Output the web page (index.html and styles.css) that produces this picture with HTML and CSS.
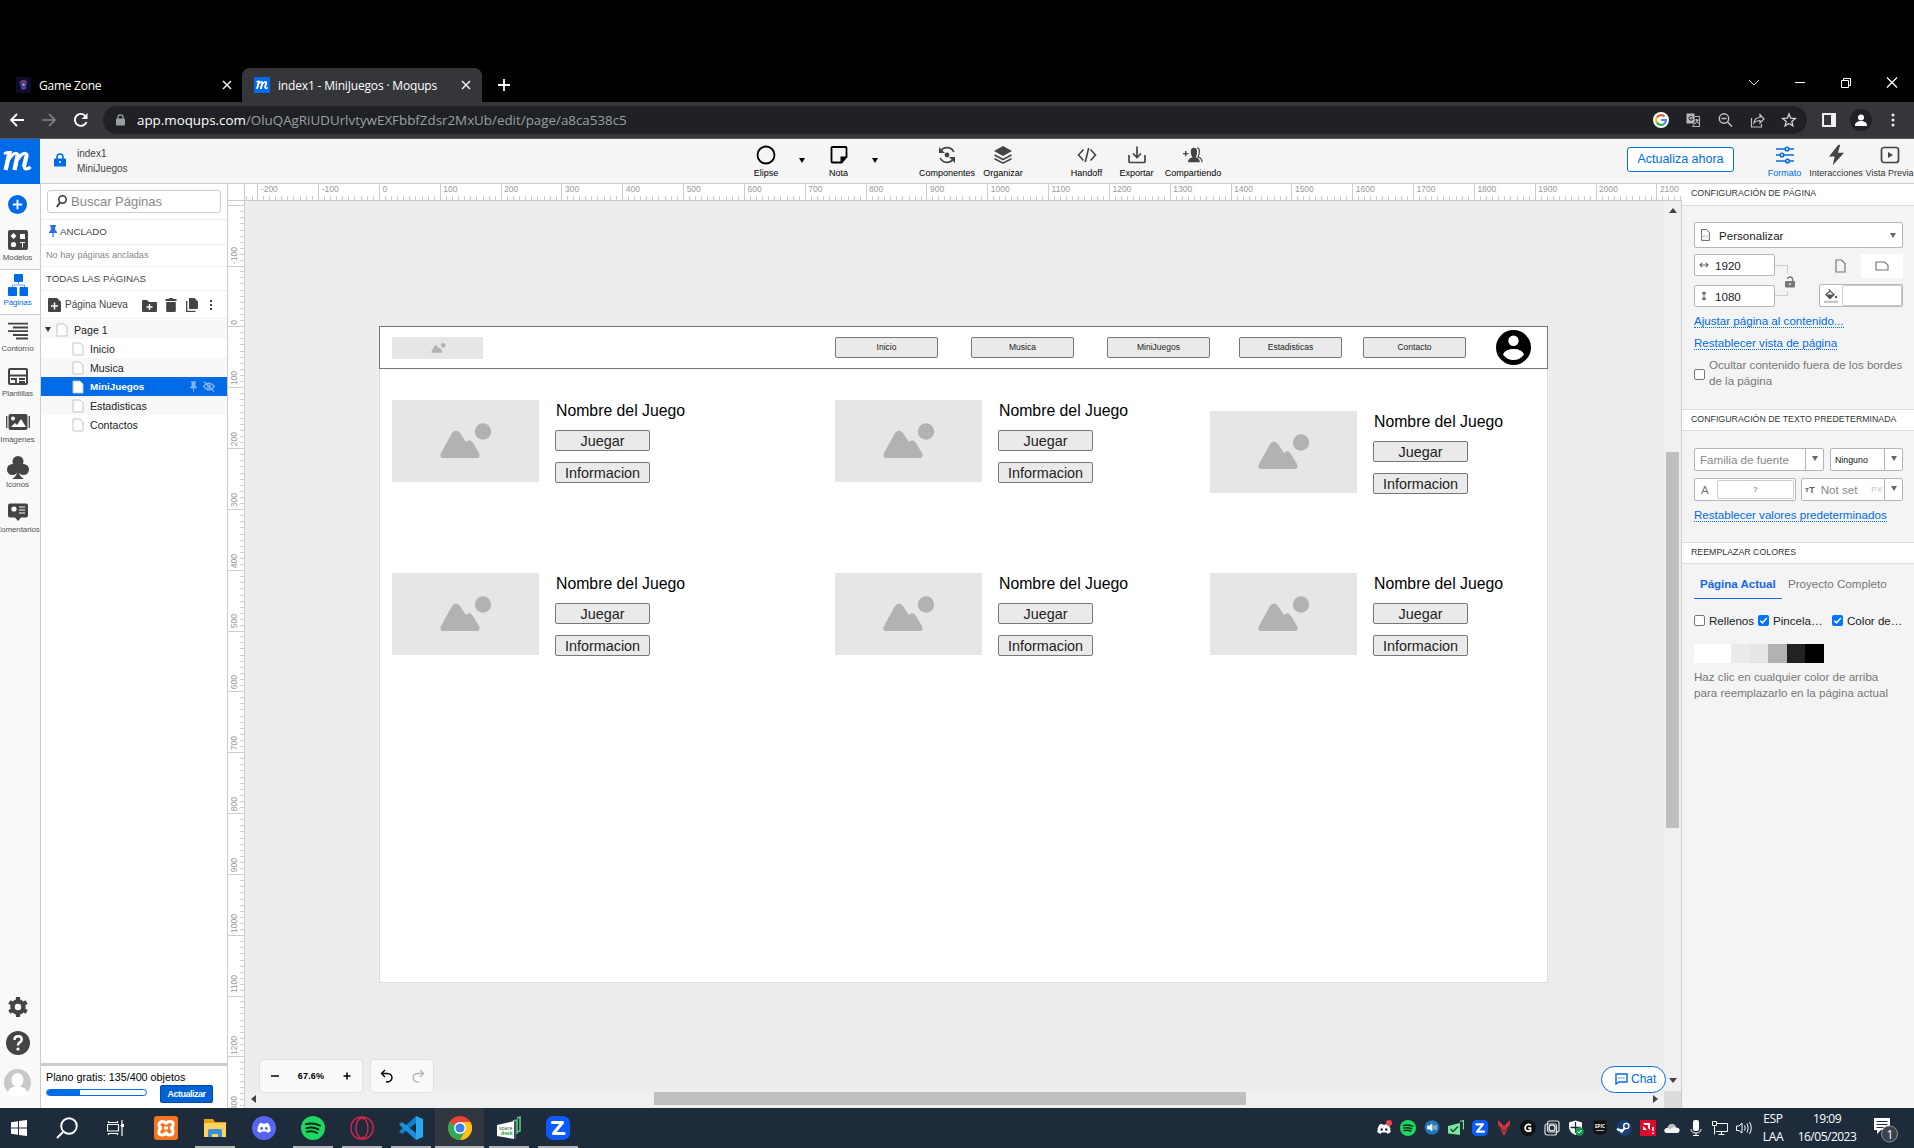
FILE: index.html
```html
<!DOCTYPE html>
<html lang="es">
<head>
<meta charset="utf-8">
<title>index1 - MiniJuegos · Moqups</title>
<link rel="stylesheet" href="styles.css">
</head>
<body>
<svg class="defs" width="0" height="0">
  <symbol id="file" viewBox="0 0 12 14"><path d="M1 1h7l3 3v9H1z" fill="#fff" stroke="#c4c4c4"/></symbol>
  <symbol id="pin" viewBox="0 0 8 12"><path d="M1 0h6v1.5H6.2V5L8 7v1H4.6v4H3.4V8H0V7l1.8-2V1.500H1z" fill="currentColor"/></symbol>
  <symbol id="photo" viewBox="0 0 52 36"><path d="M4 35q-5 0-3-5L12 10q4-5 8 0l6 9q4-4 7 1l6 10q2 5-3 5z" fill="#b2b2b2"/><circle cx="43" cy="8.500" r="8.200" fill="#b2b2b2"/></symbol>
  <symbol id="x" viewBox="0 0 10 10"><path d="M1 1l8 8M9 1L1 9" stroke="#eee" stroke-width="1.500"/></symbol>
  <symbol id="zoomus" viewBox="0 0 24 24"><rect width="24" height="24" rx="7" fill="#0b5cff"/><path d="M6.500 6.500h10L7.500 17.500H18" fill="none" stroke="#fff" stroke-width="3.200" stroke-linejoin="round" stroke-linecap="round"/></symbol>
  <symbol id="spotify" viewBox="0 0 24 24"><circle cx="12" cy="12" r="12" fill="#1ed760"/><path d="M5 8.300q7-2 14 1.300M5.500 12.200q6.500-1.700 12 1.200M6 15.800q5.500-1.300 10 1" fill="none" stroke="#14261c" stroke-width="2" stroke-linecap="round"/></symbol>
  <symbol id="discord" viewBox="0 0 18 14"><path d="M3 1.500Q5 .3 6.600.2l.6 1.200h3.600l.6-1.200q1.600.1 3.600 1.300 2.800 4.500 2.600 9.300-2 1.700-4.500 2.400l-1-1.800H5.900l-1 1.800Q2.400 12.500.4 10.800.2 6 3 1.500z" fill="#fff"/></symbol>
  <symbol id="mlogo" viewBox="0 0 30 20"><path d="M2 2.800Q5 1 8.500 1.200L4.500 18.500" fill="none" stroke="#fff" stroke-width="2.600"/><path d="M7.300 1.500L3.500 19" fill="none" stroke="#fff" stroke-width="4"/><path d="M7 8q4-6 7.500-5.500 2 .5 1.300 3.500L13 19M16 8q4-6 7.500-5.500 2 .5 1.300 3.500l-2.300 9q-.6 3 2.300 2.800 2-.2 3.700-2" fill="none" stroke="#fff" stroke-width="3.200"/><path d="M15.300 5l-3 14M24.300 5l-2.500 11" stroke="#fff" stroke-width="4"/></symbol>
</svg>

<div class="browser">
  <div class="tabs">
    <div class="tab">
      <svg class="fav" viewBox="0 0 15 16"><rect width="15" height="16" fill="#0d0d2b"/><path d="M4 5q3.500-4 7 0l-1 7q-2.500 2-5 0z" fill="#3b3a86"/><path d="M3.500 6q4-5 8 0M6 11h3" stroke="#b23a5a" fill="none"/><circle cx="7.500" cy="7.500" r="1.500" fill="#8690c8"/></svg>
      <span>Game Zone</span><svg class="close"><use href="#x"/></svg>
    </div>
    <div class="tab tab-active">
      <svg class="fav" viewBox="0 0 16 16"><rect width="16" height="16" fill="#006be6"/><use href="#mlogo" x="1.500" y="3" width="13" height="10"/></svg>
      <span>index1 - MiniJuegos · Moqups</span><svg class="close"><use href="#x"/></svg>
    </div>
    <svg class="newtab" viewBox="0 0 12 12"><path d="M6 0v12M0 6h12" stroke="#fff" stroke-width="1.800"/></svg>
    <div class="wincontrols">
      <svg viewBox="0 0 46 20"><path d="M18 7l5 5 5-5" stroke="#ddd" fill="none"/></svg>
      <svg viewBox="0 0 46 20"><path d="M18 9.500h10" stroke="#fff"/></svg>
      <svg viewBox="0 0 46 20"><path d="M18.500 7.500h7v7h-7zM20.500 7.500v-2h7v7h-2" stroke="#fff" fill="none"/></svg>
      <svg viewBox="0 0 46 20"><path d="M18 4.500l10 10M28 4.500L18 14.500" stroke="#fff" stroke-width="1.200"/></svg>
    </div>
  </div>
  <div class="addressbar">
    <svg class="nav" viewBox="0 0 16 16"><path d="M15 8H2M8 2L2 8l6 6" stroke="#fff" stroke-width="1.800" fill="none"/></svg>
    <svg class="nav" viewBox="0 0 16 16"><path d="M1 8h13M8 2l6 6-6 6" stroke="#85878b" stroke-width="1.600" fill="none"/></svg>
    <svg class="nav" viewBox="0 0 16 16"><path d="M13.500 10A6 6 0 1 1 12.500 4" stroke="#fff" stroke-width="1.900" fill="none"/><path d="M14.500 1v6h-6z" fill="#fff"/></svg>
    <div class="url">
      <svg class="lock" viewBox="0 0 9 12"><rect y="4.500" width="9" height="7" rx="1" fill="#9aa0a6"/><path d="M2 5V3q0-2.200 2.500-2.200T7 3v2" fill="none" stroke="#9aa0a6" stroke-width="1.300"/></svg>
      <span class="address"><b>app.moqups.com</b>/OluQAgRiUDUrlvtywEXFbbfZdsr2MxUb/edit/page/a8ca538c5</span>
      <div class="urlicons">
        <svg viewBox="0 0 32 16"><circle cx="16" cy="8" r="8" fill="#fff"/><g fill="none" stroke-width="2"><path d="M11.800 5.500A5 5 0 0 1 19.500 4.500" stroke="#ea4335"/><path d="M11.600 10.300A5 5 0 0 1 11.700 5.600" stroke="#fbbc05"/><path d="M19.300 11.700A5 5 0 0 1 11.600 10.300" stroke="#34a853"/><path d="M16 8h5A5 5 0 0 1 19.200 11.800" stroke="#4285f4"/></g></svg>
        <svg viewBox="0 0 32 16"><rect x="9.500" y="1.500" width="8" height="10" fill="#b7b9bb"/><path d="M17.500 4.500h5v10h-7l2-3" fill="none" stroke="#b7b9bb"/><path d="M15.500 5a2 2 0 1 0 .3 2h-2" stroke="#202124" fill="none"/><path d="M17 8h5M19.500 7v1l2 4M21 8l-3 4" stroke="#b7b9bb" fill="none"/></svg>
        <svg viewBox="0 0 32 16"><circle cx="15" cy="6.500" r="4.700" fill="none" stroke="#c2c4c6" stroke-width="1.400"/><path d="M12.500 6.500h5M18.500 10l4.500 4.500" stroke="#c2c4c6" stroke-width="1.500"/></svg>
        <svg viewBox="0 0 32 16"><path d="M10.500 6v9h10v-3M13 11q.5-5.500 6-5.500V2.500L23 7l-4 4V8.500q-4 0-6 2.500z" fill="none" stroke="#c2c4c6" stroke-width="1.200"/></svg>
        <svg viewBox="0 0 32 16"><path d="M16 2l1.700 4.200 4.600.3-3.500 2.900 1.100 4.500L16 11.400l-3.900 2.500 1.100-4.500L9.700 6.500l4.600-.3z" fill="none" stroke="#d5d6d8" stroke-width="1.300"/></svg>
      </div>
    </div>
    <div class="browsericons">
      <svg viewBox="0 0 32 24"><path d="M9 5h14v14H9z" fill="#f1f1f1"/><path d="M11 7h7v10h-7z" fill="#35363a"/></svg>
      <svg viewBox="0 0 32 24"><circle cx="16" cy="12" r="11" fill="#202124"/><circle cx="16" cy="9.500" r="3" fill="#fff"/><path d="M10 18v-1.500q1-3.500 6-3.500t6 3.500V18z" fill="#fff"/></svg>
      <svg viewBox="0 0 32 24"><g fill="#eee"><circle cx="16" cy="7" r="1.500"/><circle cx="16" cy="12" r="1.500"/><circle cx="16" cy="17" r="1.500"/></g></svg>
    </div>
  </div>
</div>

<div class="appbar">
  <div class="brand"><svg width="30" height="20"><use href="#mlogo"/></svg></div>
  <svg class="applock" viewBox="0 0 12 14"><rect y="5.500" width="12" height="8" rx="1" fill="#006be6"/><path d="M3 6V4q0-3 3-3t3 3v2" fill="none" stroke="#006be6" stroke-width="1.600"/><circle cx="6" cy="9" r="1" fill="#fff"/></svg>
  <div class="doc"><div>index1</div><div>MiniJuegos</div></div>
  <div class="tools">
    <div class="tool w40"><svg viewBox="0 0 20 20"><circle cx="10" cy="10" r="8.500" fill="none" stroke="#000" stroke-width="1.800"/></svg><span>Elipse</span></div>
    <div class="caret w32"></div>
    <div class="tool w41"><svg viewBox="0 0 20 20"><path d="M3.500 2h13q1 0 1 1v9l-5 5.500h-9q-1 0-1-1V3q0-1 1-1z" fill="none" stroke="#000" stroke-width="1.800"/><path d="M11.500 17.500v-6h6z"/></svg><span>Nota</span></div>
    <div class="caret w32"></div>
    <div class="tool w64 gap24"><svg viewBox="0 0 20 20"><path d="M16.800 7A7.500 7.500 0 0 0 3.500 6.500M3.200 13a7.500 7.500 0 0 0 13.300.5" fill="none" stroke="#444" stroke-width="1.700"/><path d="M2 2v6h6zM18 18v-6h-6z" fill="#444"/><circle cx="10" cy="10" r="2.400" fill="#444"/></svg><span>Componentes</span></div>
    <div class="tool w48"><svg viewBox="0 0 20 20"><path d="M10 1l9 5-9 5-9-5z" fill="#444"/><path d="M1.500 10l8.500 4.500 8.500-4.500M1.500 13.700l8.500 4.500 8.500-4.500" stroke="#444" stroke-width="1.600" fill="none"/></svg><span>Organizar</span></div>
    <div class="tool w49 gap35"><svg viewBox="0 0 20 20"><path d="M6.500 4.500L1.500 10l5 5.500M13.500 4.500l5 5.500-5 5.500M11.700 3L8.300 17" fill="none" stroke="#444" stroke-width="1.600"/></svg><span>Handoff</span></div>
    <div class="tool w51"><svg viewBox="0 0 20 20"><path d="M2 10v6.500q0 1 1 1h14q1 0 1-1V10M10 1.500V12M6 8.500l4 4 4-4" fill="none" stroke="#444" stroke-width="1.700"/></svg><span>Exportar</span></div>
    <div class="tool w62"><svg viewBox="0 0 22 20"><path d="M0 8.500h6M3 5.500v6" stroke="#444" stroke-width="1.500"/><path d="M5.500 18q0-4.500 5-5.500Q8.500 10 8.500 6.500 8.500 2 12 2t3.500 4.500Q15.500 10 14 12.500q4.500 1 4.500 5.500z" fill="#444"/><path d="M15.500 2q3 .5 2.500 5-.3 3-1.500 5 4.500 1.500 4.500 6" fill="none" stroke="#444" stroke-width="1.300"/></svg><span>Compartiendo</span></div>
  </div>
  <button class="upgrade">Actualiza ahora</button>
  <div class="modes">
    <div class="tool w41 on"><svg viewBox="0 0 20 20"><path d="M1 4h18M1 10h18M1 16h18" stroke="#006be6" stroke-width="1.700"/><g fill="#f5f5f5" stroke="#006be6" stroke-width="1.500"><circle cx="12" cy="4" r="1.800"/><circle cx="7" cy="10" r="1.800"/><circle cx="12.500" cy="16" r="1.800"/></g></svg><span>Formato</span></div>
    <div class="tool w62"><svg class="bolt" viewBox="0 0 16 22"><path d="M10 0L0 12.500h6L4 22 16 8.500H9.500L12 0z" fill="#444"/></svg><span>Interacciones</span></div>
    <div class="tool w45"><svg viewBox="0 0 20 20"><rect x="1.500" y="2.500" width="17" height="15" rx="2.500" fill="none" stroke="#444" stroke-width="1.700"/><path d="M8 7l5 3-5 3z" fill="#444"/></svg><span>Vista Previa</span></div>
  </div>
</div>

<div class="workspace">
  <div class="rail">
    <svg class="add" viewBox="0 0 20 20"><circle cx="10" cy="10" r="10" fill="#006be6"/><path d="M10 5v10M5 10h10" stroke="#fff" stroke-width="2"/></svg>
    <div class="railitem"><svg viewBox="0 0 20 20"><rect width="20" height="20" rx="2" fill="#444"/><path d="M5.500 3l3 3-3 3-3-3zM12 4h5v5h-5zM12 12h5v1h-2v4.500h-1V13h-2z" fill="#fff"/><circle cx="5.500" cy="14.500" r="2.600" fill="#fff"/></svg><span>Modelos</span></div>
    <div class="railitem railactive"><svg viewBox="0 0 20 22"><g fill="#006be6"><rect x="6" width="9" height="8" rx="1"/><rect y="13" width="9" height="9" rx="1"/><rect x="11.500" y="13" width="8.500" height="9" rx="1"/></g><path d="M10.500 8v2.500M4.500 13v-2h12v2" stroke="#6ba8ee" fill="none"/></svg><span>Páginas</span></div>
    <div class="railitem"><svg viewBox="0 0 20 20"><path d="M0 2.700h20M5 6.500h15M0 10.200h20M5 14h15M8 17.500h12" stroke="#444" stroke-width="1.800"/></svg><span>Contorno</span></div>
    <div class="railitem"><svg viewBox="0 0 20 20"><rect x="1" y="3" width="18" height="15" rx="1" fill="none" stroke="#444" stroke-width="2"/><path d="M1 9.500h18M3 13h5v4M11 13h6M11 16h6" stroke="#444" stroke-width="1.800" fill="none"/></svg><span>Plantillas</span></div>
    <div class="railitem"><svg class="wide" viewBox="0 0 24 20"><rect x="2.500" y="2" width="19" height="16" rx="2" fill="#444"/><path d="M.7 4v12M23.300 4v12" stroke="#444" stroke-width="1.300"/><circle cx="7" cy="6.500" r="2" fill="#fff"/><path d="M5 15l4-4 2 2 4-6 5 8z" fill="#fff"/></svg><span>Imágenes</span></div>
    <div class="railitem"><svg class="club" viewBox="0 0 22 23"><circle cx="11" cy="5.500" r="5.500" fill="#444"/><circle cx="5.500" cy="13.500" r="5.500" fill="#444"/><circle cx="16.500" cy="13.500" r="5.500" fill="#444"/><path d="M9 9h4l-1 7q0 4 5 7H5q5-3 5-7z" fill="#444"/></svg><span>Iconos</span></div>
    <div class="railitem"><svg viewBox="0 0 20 20"><path d="M2 1.500h16q2 0 2 2v10q0 2-2 2h-5L10 19l-3-3.500H2q-2 0-2-2v-10q0-2 2-2z" fill="#444"/><circle cx="6" cy="7" r="2.600" fill="#fff"/><path d="M11 5h6M11 8h6M11 11h6" stroke="#fff"/></svg><span>Comentarios</span></div>
    <div class="railfoot">
      <svg width="20" height="20" viewBox="0 0 20 20"><circle cx="10" cy="10" r="5.500" fill="none" stroke="#444" stroke-width="4.500"/><path d="M10 0v4M10 16v4M1.300 5l3.500 2M15.200 13l3.500 2M1.300 15l3.500-2M15.200 7l3.500-2" stroke="#444" stroke-width="4.200"/></svg>
      <svg width="24" height="24" viewBox="0 0 24 24"><circle cx="12" cy="12" r="12" fill="#444"/><path d="M8.500 9q0-3.800 3.700-3.800 3.500 0 3.500 3.200 0 2-2 3-1.700 1-1.700 3" fill="none" stroke="#fff" stroke-width="2.500"/><circle cx="12" cy="18" r="1.600" fill="#fff"/></svg>
      <svg width="27" height="27" viewBox="0 0 27 27"><circle cx="13.500" cy="13.500" r="13.500" fill="#c8c8c8"/><ellipse cx="13.500" cy="11" rx="6" ry="7" fill="#fff"/><path d="M3.500 24q1-6 10-7 9 1 10 7-4 3.300-10 3.300T3.500 24z" fill="#fff"/></svg>
    </div>
  </div>

  <div class="pages">
    <div class="searchwrap"><div class="search"><svg width="11" height="13" viewBox="0 0 11 13"><circle cx="6.500" cy="4.500" r="3.700" fill="none" stroke="#333" stroke-width="1.500"/><path d="M4 7.500L.8 12" stroke="#333" stroke-width="1.700"/></svg>Buscar Páginas</div></div>
    <div class="pinned"><svg width="8" height="12"><use href="#pin"/></svg>ANCLADO</div>
    <div class="nopin">No hay páginas ancladas</div>
    <div class="all">TODAS LAS PÁGINAS</div>
    <div class="newpage">
      <svg width="13" height="14" viewBox="0 0 13 14"><path d="M1 0h8l4 4v9q0 1-1 1H1q-1 0-1-1V1q0-1 1-1z" fill="#444"/><path d="M6.500 4.500v7M3 8h7" stroke="#fff" stroke-width="1.500"/></svg>
      <span>Página Nueva</span>
      <svg class="a1" width="15" height="12" viewBox="0 0 15 12"><path d="M0 1q0-1 1-1h4l2 2h7q1 0 1 1v8q0 1-1 1H1q-1 0-1-1z" fill="#444"/><path d="M7.500 4v6M4.500 7h6" stroke="#fff" stroke-width="1.400"/></svg>
      <svg class="a2" width="12" height="14" viewBox="0 0 12 14"><path d="M.5 1h3l1-1h3l1 1h3v2H.5zM1.200 4h9.600v9q0 1-1 1H2.200q-1 0-1-1z" fill="#444"/></svg>
      <svg class="a3" width="12" height="14" viewBox="0 0 12 14"><path d="M3 0h5.500L12 3.500V10q0 1-1 1H3z" fill="#444"/><path d="M.7 3v10.300H9.500" fill="none" stroke="#444" stroke-width="1.300"/></svg>
      <svg class="a4" width="4" height="12" viewBox="0 0 4 12"><path d="M1 1h2v2H1zM1 5h2v2H1zM1 9h2v2H1z" fill="#444"/></svg>
    </div>
    <div class="tree">
      <div class="node root"><i></i><svg><use href="#file"/></svg>Page 1</div>
      <div class="node"><svg><use href="#file"/></svg>Inicio</div>
      <div class="node"><svg><use href="#file"/></svg>Musica</div>
      <div class="node sel"><svg><use href="#file"/></svg>MiniJuegos
        <svg class="npin"><use href="#pin"/></svg>
        <svg class="neye" viewBox="0 0 12 11"><path d="M.5 5.500q5-6.500 11 0-5.500 6.500-11 0z" fill="none" stroke="#80b3f2" stroke-width="1.300"/><circle cx="6" cy="5.500" r="2" fill="#80b3f2"/><path d="M1 .5l10 10" stroke="#80b3f2" stroke-width="1.300"/></svg></div>
      <div class="node"><svg><use href="#file"/></svg>Estadisticas</div>
      <div class="node"><svg><use href="#file"/></svg>Contactos</div>
    </div>
    <div class="plan">
      <div>Plano gratis: 135/400 objetos</div>
      <div class="planrow"><div class="quota"><i></i></div><button>Actualizar</button></div>
    </div>
  </div>

  <div class="editor">
    <div class="hruler"><div class="htrack"><b></b><b>-200</b><b>-100</b><b>0</b><b>100</b><b>200</b><b>300</b><b>400</b><b>500</b><b>600</b><b>700</b><b>800</b><b>900</b><b>1000</b><b>1100</b><b>1200</b><b>1300</b><b>1400</b><b>1500</b><b>1600</b><b>1700</b><b>1800</b><b>1900</b><b>2000</b><b>2100</b></div></div>
    <div class="below">
      <div class="vruler"><div class="vtrack"><b></b><b>-100</b><b>0</b><b>100</b><b>200</b><b>300</b><b>400</b><b>500</b><b>600</b><b>700</b><b>800</b><b>900</b><b>1000</b><b>1100</b><b>1200</b><b>1300</b></div></div>
      <div class="stagecol">
        <div class="stage">
          <div class="page">
            <div class="banner"></div>
            <div class="ph logo"><svg><use href="#photo"/></svg></div>
            <div class="navbtn n1">Inicio</div><div class="navbtn n2">Musica</div><div class="navbtn n3">MiniJuegos</div><div class="navbtn n4">Estadisticas</div><div class="navbtn n5">Contacto</div>
            <svg class="user" viewBox="0 0 35 35"><circle cx="17.500" cy="17.500" r="17.500"/><circle cx="17.500" cy="10.700" r="5.200" fill="#fff"/><path d="M7 24.500q2-5.500 10.500-5.500T28 24.500q-4 5.500-10.500 5.500T7 24.500z" fill="#fff"/></svg>
            <div class="game g1"><div class="ph"><svg><use href="#photo"/></svg></div><div class="info"><p>Nombre del Juego</p><button>Juegar</button><button>Informacion</button></div></div>
            <div class="game g2"><div class="ph"><svg><use href="#photo"/></svg></div><div class="info"><p>Nombre del Juego</p><button>Juegar</button><button>Informacion</button></div></div>
            <div class="game g3"><div class="ph"><svg><use href="#photo"/></svg></div><div class="info"><p>Nombre del Juego</p><button>Juegar</button><button>Informacion</button></div></div>
            <div class="game g4"><div class="ph"><svg><use href="#photo"/></svg></div><div class="info"><p>Nombre del Juego</p><button>Juegar</button><button>Informacion</button></div></div>
            <div class="game g5"><div class="ph"><svg><use href="#photo"/></svg></div><div class="info"><p>Nombre del Juego</p><button>Juegar</button><button>Informacion</button></div></div>
            <div class="game g6"><div class="ph"><svg><use href="#photo"/></svg></div><div class="info"><p>Nombre del Juego</p><button>Juegar</button><button>Informacion</button></div></div>
          </div>
          <div class="controls">
            <div class="zoombox"><svg width="10" height="10" viewBox="0 0 10 10"><path d="M1 5h8" stroke="#000" stroke-width="1.500"/></svg><span>67.6%</span><svg width="10" height="10" viewBox="0 0 10 10"><path d="M1.500 5h7M5 1.500v7" stroke="#000" stroke-width="1.500"/></svg></div>
            <div class="undobox"><svg width="13" height="14" viewBox="0 0 13 14"><path d="M1.500 4.500H7q5 .3 5 4.300Q11.500 13 6 13M5 1L1.500 4.500 5 8" stroke="#000" stroke-width="1.400" fill="none"/></svg><svg width="13" height="14" viewBox="0 0 13 14"><path d="M11.500 4.500H6q-5 .3-5 4.300Q1.500 13 7 13M8 1l3.500 3.500L8 8" stroke="#b5b5b5" stroke-width="1.300" fill="none"/></svg></div>
          </div>
          <div class="chat"><svg width="13" height="12" viewBox="0 0 13 12"><path d="M1 11V1h11v8H4z" fill="none" stroke="#006be6" stroke-width="1.400"/><path d="M3.500 5h6" stroke="#006be6" stroke-dasharray="1.500 .8"/></svg>Chat</div>
        </div>
        <div class="hscroll"><i class="left"></i><i class="thumb"></i><i class="right"></i></div>
      </div>
      <div class="vscroll"><i class="up"></i><i class="thumb"></i><i class="down"></i><i class="corner"></i></div>
    </div>
  </div>

  <div class="props">
    <h3>CONFIGURACIÓN DE PÁGINA</h3>
    <div class="sec s1">
      <div class="box select"><svg width="9" height="12" viewBox="0 0 9 12"><path d="M.6.600h5l2.800 3v7.800H.6z" fill="none" stroke="#666"/><path d="M3.500 6.500L2.500 7.500l1 1M5.500 6.500l1 1-1 1" fill="none" stroke="#666" stroke-width=".8"/></svg><span>Personalizar</span><i class="dn"></i></div>
      <div class="sizes">
        <div class="dims">
          <div class="box dim"><svg width="10" height="8" viewBox="0 0 10 8"><path d="M1 4h8M3 2L1 4l2 2M7 2l2 2-2 2" fill="none" stroke="#666" stroke-width="1.100"/></svg>1920</div>
          <div class="box dim"><svg width="10" height="10" viewBox="0 0 10 10"><path d="M5 1v8M3 3l2-2 2 2M3 7l2 2 2-2" fill="none" stroke="#666" stroke-width="1.100"/></svg>1080</div>
        </div>
        <div class="link"><i></i><svg width="10" height="12" viewBox="0 0 10 12"><rect y="5" width="10" height="6.500" rx="1" fill="#777"/><path d="M2.500 3q0-2 2.500-2t2.700 2.500V6" fill="none" stroke="#777" stroke-width="1.300"/><circle cx="5" cy="8" r="1" fill="#eee"/></svg><i></i></div>
        <div class="orient">
          <div class="orow"><span><svg width="11" height="14" viewBox="0 0 11 14"><path d="M1 1h5.500L10 4.500V13H1z" fill="none" stroke="#777" stroke-width="1.200"/></svg></span><span class="act"><svg width="14" height="10" viewBox="0 0 14 10"><path d="M1 1h8.500L13 4v5H1z" fill="none" stroke="#777" stroke-width="1.200"/></svg></span></div>
          <div class="box fill"><svg width="14" height="14" viewBox="0 0 14 14"><path d="M2 5.500l4-3.500 4 3.500L6 9.500zM5 0l2 3" fill="none" stroke="#555" stroke-width="1.300"/><path d="M2 5.500h8L6 9.500z" fill="#555"/><circle cx="12" cy="8" r="1.200" fill="#555"/><path d="M0 12.800h14" stroke="#c3bcb8" stroke-width="2"/></svg><b></b></div>
        </div>
      </div>
      <a class="l1">Ajustar página al contenido...</a>
      <a class="l2">Restablecer vista de página</a>
      <label class="hide"><i class="cb"></i><span>Ocultar contenido fuera de los bordes de la página</span></label>
    </div>
    <h3>CONFIGURACIÓN DE TEXTO PREDETERMINADA</h3>
    <div class="sec s2">
      <div class="frow r1"><div class="box ff"><span>Familia de fuente</span><em><i class="dn"></i></em></div><div class="box fw"><span>Ninguno</span><em><i class="dn"></i></em></div></div>
      <div class="frow r2"><div class="box fc"><span>A</span><b>?</b></div><div class="box fs"><small>т</small><strong>T</strong><span>Not set</span><u>PX</u><em><i class="dn"></i></em></div></div>
      <a>Restablecer valores predeterminados</a>
    </div>
    <h3>REEMPLAZAR COLORES</h3>
    <div class="sec s3">
      <div class="ctabs"><span class="cur">Página Actual</span><span>Proyecto Completo</span></div>
      <div class="checks"><label><i class="cb"></i>Rellenos</label><label><svg class="ck" viewBox="0 0 11 11"><rect width="11" height="11" rx="2" fill="#0075ff"/><path d="M2.300 5.700l2.200 2.200 4.300-5" fill="none" stroke="#fff" stroke-width="1.600"/></svg>Pincela…</label><label><svg class="ck" viewBox="0 0 11 11"><rect width="11" height="11" rx="2" fill="#0075ff"/><path d="M2.300 5.700l2.200 2.200 4.300-5" fill="none" stroke="#fff" stroke-width="1.600"/></svg>Color de…</label></div>
      <div class="swatches"><i></i><i></i><i></i><i></i><i></i><i></i></div>
      <p>Haz clic en cualquier color de arriba para reemplazarlo en la página actual</p>
    </div>
  </div>
</div>

<div class="taskbar">
  <div class="start">
    <svg width="16" height="16" viewBox="0 0 16 16"><path d="M0 2.200L7 1.200v6.300H0zM8 1l8-1v7.500H8zM0 8.500h7v6.300l-7-1zM8 8.500h8V16l-8-1z" fill="#fff"/></svg>
    <svg width="22" height="22" viewBox="0 0 22 22"><circle cx="13" cy="9" r="7.800" fill="none" stroke="#fff" stroke-width="1.900"/><path d="M7.500 14.500L1 21" stroke="#fff" stroke-width="1.900"/></svg>
    <svg width="17" height="16" viewBox="0 0 17 16"><path d="M1.500 1v1.500h9V1M1.500 15v-1.500h9V15M.5 4.500h11v6.500H.5zM15 0v16M13.500 5.500h3" fill="none" stroke="#fff" stroke-width="1.200"/><path d="M14 4h3v3h-3z" fill="#fff"/></svg>
  </div>
  <div class="apps">
    <span><svg viewBox="0 0 24 24"><rect width="24" height="24" rx="3" fill="#f5741f"/><path d="M8 5.500q4 0 4 3 0-3 4-3t3 3.500q0 2.500-3 3 3 0 3 3.500T16 19q-4 0-4-3.500Q12 19 8 19t-3-3.500Q5 12 8 12 5 11.500 5 9t3-3.500z" fill="none" stroke="#fff" stroke-width="3"/><path d="M10 12h4" stroke="#fff" stroke-width="3"/></svg></span>
    <span class="open"><svg viewBox="0 0 24 24"><path d="M1 3h9l2 3h11v5H1z" fill="#e8a317"/><path d="M1 7h22v14H1z" fill="#ffd45e"/><path d="M5 21v-6q0-2 2-2h10q2 0 2 2v6h-4v-3H9v3z" fill="#3b8fdb"/></svg></span>
    <span><svg viewBox="0 0 24 24"><circle cx="12" cy="12" r="12" fill="#5865f2"/><use href="#discord" x="5" y="6.500" width="14" height="11"/><circle cx="9.600" cy="12.500" r="1.400" fill="#5865f2"/><circle cx="14.400" cy="12.500" r="1.400" fill="#5865f2"/></svg></span>
    <span class="open"><svg><use href="#spotify"/></svg></span>
    <span class="open"><svg viewBox="0 0 24 24"><circle cx="12" cy="12" r="11.200" fill="none" stroke="#e0234e" stroke-width="1.300"/><ellipse cx="12" cy="12" rx="6" ry="10" fill="none" stroke="#e0234e" stroke-width="1.300"/></svg></span>
    <span class="open"><svg viewBox="0 0 24 24"><path d="M17 0l7 3v18l-7 3z" fill="#29a8f2"/><path d="M17 0v7L3 18 0 15.500z" fill="#0f80cc"/><path d="M17 24v-7L3 6 0 8.500z" fill="#1a8fdc"/></svg></span>
    <span class="open focus"><svg viewBox="0 0 24 24"><circle cx="12" cy="12" r="12" fill="#ea4335"/><path d="M1.600 6A12 12 0 0 0 12 24l5.200-9L12 12z" fill="#34a853"/><path d="M12 24A12 12 0 0 0 22.400 6H12l5.200 9z" fill="#fbc116"/><circle cx="12" cy="12" r="6" fill="#fff"/><circle cx="12" cy="12" r="4.600" fill="#3b7de9"/></svg></span>
    <span class="open"><svg viewBox="0 0 24 24"><path d="M20 2l3-1v14l-3 1M16 5l4-1v14" stroke="#5cc78a" stroke-width="1.600" fill="none"/><path d="M0 9l17-4v18L0 20z" fill="#fff"/><path d="M18 5v18" stroke="#777"/><text x="2" y="14" font-size="5" fill="#333">space</text><text x="4" y="19" font-size="5" fill="#17a84b" font-weight="bold">desk</text></svg></span>
    <span class="open"><svg><use href="#zoomus"/></svg></span>
  </div>
  <div class="tray">
    <span><svg viewBox="0 0 16 16"><use href="#discord" x="1" y="3.500" width="14" height="11"/><circle cx="5.700" cy="9.500" r="1.300" fill="#1d2b3b"/><circle cx="10.300" cy="9.500" r="1.300" fill="#1d2b3b"/><circle cx="13" cy="3" r="3" fill="#f04747"/></svg></span>
    <span><svg><use href="#spotify"/></svg></span>
    <span><svg viewBox="0 0 16 16"><circle cx="8" cy="7.500" r="7.300" fill="#2277b8"/><path d="M3.500 6h2L8 4v7L5.500 9h-2zM10 5.500v4M12 5v5" fill="#fff" stroke="#fff" stroke-width=".8"/></svg></span>
    <span><svg viewBox="0 0 16 16"><path d="M12 1.500l3.500-1v9" stroke="#75e29b" fill="none" stroke-width="1.300"/><path d="M0 6l12-3v12L0 13.500z" fill="#7be79c"/><path d="M2.500 9l2.500 2.500L10 6.500" stroke="#1c5a35" fill="none" stroke-width="1.600"/></svg></span>
    <span><svg><use href="#zoomus"/></svg></span>
    <span><svg viewBox="0 0 16 16"><path d="M2 0l6 6 6-6v5L8 11 2 5zM3.500 8L8 12l4.500-4L8 16z" fill="#d0333a"/></svg></span>
    <span><svg viewBox="0 0 16 16"><circle cx="8" cy="8" r="8" fill="#111"/><path d="M11 5q-5-2-6 3 .5 4 5.500 3V8H8" fill="none" stroke="#fff" stroke-width="1.700"/></svg></span>
    <span><svg viewBox="0 0 16 16"><rect x="3.500" y="1" width="11.500" height="11" rx="2" fill="none" stroke="#ddd" stroke-width="1.200"/><rect x="1" y="4" width="11.500" height="11" rx="2" fill="none" stroke="#ddd" stroke-width="1.200"/><circle cx="8" cy="8" r="3" fill="none" stroke="#ddd" stroke-width="1.500"/></svg></span>
    <span><svg viewBox="0 0 16 16"><path d="M7.500.500l6.500 2V7q0 5-6.500 8Q1 12 1 7V2.500z" fill="#fff"/><path d="M7.500 2v11M2.500 7.500h10" stroke="#1d2b3b" stroke-width="1.300"/><circle cx="11.500" cy="11.500" r="4.300" fill="#159a48"/><path d="M9.500 11.500l1.500 1.500 2.500-3" stroke="#fff" fill="none"/></svg></span>
    <span><svg viewBox="0 0 16 16"><path d="M1.500.500h13v12L8 15.500l-6.500-3z" fill="#111"/><text x="3" y="8" font-size="6" font-weight="bold" textLength="10" lengthAdjust="spacingAndGlyphs" fill="#fff">EPIC</text><path d="M4 10.500h8" stroke="#aaa"/></svg></span>
    <span><svg viewBox="0 0 16 16"><circle cx="8" cy="8" r="7.800" fill="#1a3f7a"/><circle cx="10.300" cy="6" r="2.600" fill="none" stroke="#fff" stroke-width="1.400"/><path d="M1 9l5 2 3-3" stroke="#fff" stroke-width="2" fill="none"/><circle cx="5.500" cy="11" r="1.800" fill="#fff"/></svg></span>
    <span><svg viewBox="0 0 16 16"><rect width="16" height="16" fill="#dc0a2d"/><path d="M3 3h7v7L8 8V5H5zM3 6v4h4L5 8z" fill="#fff"/><path d="M13 7v4M13 12.500v1.500" stroke="#fff" stroke-width="1.500"/></svg></span>
    <span><svg viewBox="0 0 16 16"><path d="M2.500 13Q0 12.500.3 10 1 7.500 3.500 8 4.500 4 8 4t4 3.500q3.500 0 3.700 3-.2 2.500-2.700 2.500z" fill="#f3f3f3"/><path d="M4 7.500q1-3.300 4-3.500 3.500.5 4 3.500-4-1-6 2z" fill="#bbb"/></svg></span>
    <span><svg viewBox="0 0 16 16"><rect x="5" y="0" width="6" height="11" rx="2" fill="#fff"/><path d="M3 9q0 4 5 4t5-4M8 13v2.500M5 15.500h6" fill="none" stroke="#fff"/></svg></span>
    <span><svg viewBox="0 0 16 16"><path d="M5 3.500h10.500v8H4M9.500 11.500v3M6.500 14.500h6M.5 1.500h4v4h-4zM2.500 5.500v9" fill="none" stroke="#fff"/></svg></span>
    <span><svg viewBox="0 0 16 16"><path d="M.5 6h2.500l3-3v10L3 10.500H.5zM8.500 5.500q1.500 2.500 0 5M11 3.500q2.500 4.500 0 9M13.500 2q3.500 6 0 12" fill="none" stroke="#fff"/></svg></span>
    <div class="lang">ESP<br>LAA</div>
    <div class="clock">19:09<br>16/05/2023</div>
    <svg class="notif" viewBox="0 0 26 26"><path d="M1 1h16v12H8l-4 4v-4H1z" fill="#fff"/><path d="M3.500 4.500h11M3.500 7.500h11M3.500 10.500h7" stroke="#1d2b3b"/><circle cx="16.500" cy="17" r="8" fill="#39424d" stroke="#8d949c"/><text x="13.500" y="21.500" font-size="12" fill="#fff">1</text></svg>
  </div>
</div>
</body>
</html>
```
FILE: styles.css
```css
* { box-sizing: border-box; }
html { height: 1148px; overflow: hidden; }
body { margin: 0; width: 1914px; height: 1148px; overflow: hidden; background: #000; font-family: "Liberation Sans", Arial, sans-serif; font-size: 11.6px; color: #222; display: flex; flex-direction: column; }
svg { display: block; flex: none; }
.defs { position: absolute; }
button { font-family: inherit; padding: 0; }
p { margin: 0; }
i, em, u { font-style: normal; text-decoration: none; }

/* browser window */
.browser { height: 139px; flex: none; padding-top: 68px; display: flex; flex-direction: column; font-family: "Open Sans", "Noto Sans", sans-serif; color: #fff; }
.tabs { height: 34px; display: flex; align-items: center; }
.tab { height: 34px; width: 242px; padding: 0 10px 0 16px; display: flex; align-items: center; font-size: 12px; letter-spacing: -0.25px; }
.tab-active { width: 240px; padding: 0 11px 0 12px; background: #35363a; border-radius: 8px 8px 0 0; letter-spacing: -0.17px; }
.tab span { flex: 1; margin-left: 8px; white-space: nowrap; }
.fav { width: 15px; height: 16px; }
.tab-active .fav { width: 16px; }
.close { width: 10px; height: 10px; }
.newtab { width: 12px; height: 12px; margin-left: 16px; }
.wincontrols { margin-left: auto; display: flex; margin-right: -1px; padding-bottom: 5px; }
.wincontrols svg { width: 46px; height: 20px; }
.addressbar { height: 37px; background: #35363a; border-bottom: 1px solid #5b5c5f; display: flex; align-items: center; padding-left: 9px; }
.nav { width: 16px; height: 16px; margin-right: 16px; }
.nav:nth-child(3) { margin-right: 14px; }
.url { width: 1704px; height: 28px; border-radius: 14px; background: #202124; display: flex; align-items: center; padding-left: 13px; }
.lock { width: 9px; height: 12px; margin-right: 12px; }
.address { font-size: 13.370px; color: #9aa0a6; white-space: nowrap; }
.address b { font-weight: 400; color: #fff; }
.urlicons { margin-left: auto; display: flex; padding-right: 2px; }
.urlicons svg { width: 32px; height: 16px; }
.browsericons { display: flex; margin-left: 6px; }
.browsericons svg { width: 32px; height: 24px; }

/* application header */
.appbar { height: 45px; flex: none; background: #f5f5f5; border-bottom: 1px solid #ccc; display: flex; }
.brand { width: 40px; height: 45px; background: #006be6; display: flex; align-items: center; padding: 0 0 1px 2px; }
.applock { width: 12px; height: 14px; margin: 14px 11px 0 14px; }
.doc { font-size: 10px; line-height: 15px; padding-top: 7px; width: 669px; color: #444; }
.tools { display: flex; width: 881px; }
.tool { display: flex; flex-direction: column; align-items: center; font-size: 9px; line-height: 12px; color: #000; padding-top: 6px; white-space: nowrap; flex: none; }
.tool svg { width: 20px; height: 20px; margin-bottom: 2px; }
.tool .bolt { height: 22px; width: 15px; margin: -1px 0 1px; }
.caret::before { content: ""; display: block; border: 3.500px solid transparent; border-top: 5px solid #000; border-bottom: 0; width: 0; margin: 19px auto 0; }
.w32 { width: 32px; } .w40 { width: 40px; } .w41 { width: 41px; } .w45 { width: 45px; } .w48 { width: 48px; } .w49 { width: 49px; } .w51 { width: 51px; } .w62 { width: 62px; } .w64 { width: 64px; }
.gap24 { margin-left: 24px; } .gap35 { margin-left: 35px; }
.upgrade { width: 107px; height: 25px; margin: 8px 30px 0 0; border: 1px solid #006be6; border-radius: 3px; background: #fff; color: #006be6; font-size: 12.500px; flex: none; padding-bottom: 1px; }
.modes { display: flex; }
.modes .tool { color: #333; }
.modes .on { color: #006be6; }

/* icon rail */
.workspace { height: 924px; flex: none; display: flex; background: #f4f4f4; }
.rail { width: 41px; background: #f9f9f9; border-right: 1px solid #ccc; display: flex; flex-direction: column; overflow: hidden; flex: none; }
.add { width: 19px; height: 19px; margin: 11px 0 16px 8px; }
.railitem { height: 45.200px; display: flex; flex-direction: column; align-items: center; width: 35px; font-size: 8px; letter-spacing: -.1px; color: #555; line-height: 10px; flex: none; }
.railitem svg { width: 20px; height: 20px; margin-bottom: 3px; }
.railitem svg.wide { width: 24px; }
.railitem svg.club { height: 23px; width: 22px; margin: -1px 0 1px; }
.railactive { background: #fff; width: 41px; padding-right: 6px; color: #006be6; height: 46px; border-block: 1px solid #ccc; margin: -6px 0 0; padding-top: 4px; }
.railactive svg { height: 22px; margin-bottom: 2px; }
.railactive ~ .railitem { margin-top: 6px; margin-bottom: -6px; }
.railfoot { margin-top: auto; display: flex; flex-direction: column; align-items: center; width: 35px; gap: 14px; padding-bottom: 12px; }

/* page list */
.pages { width: 187px; background: #fff; border-right: 1px solid #ccc; display: flex; flex-direction: column; flex: none; }
.searchwrap { padding: 6px; height: 36px; border-bottom: 1px solid #eee; flex: none; }
.search { width: 174px; height: 23px; border: 1px solid #ccc; border-radius: 3px; font-size: 13px; color: #888; display: flex; align-items: center; padding: 0 0 1px 8px; gap: 4px; }
.pinned, .nopin, .all, .newpage { border-bottom: 1px solid #eee; padding-left: 5px; display: flex; align-items: center; font-size: 9.700px; color: #444; flex: none; }
.pinned { height: 25px; padding: 0 0 2px 8px; gap: 3px; }
.pinned svg { color: #2a6fe0; }
.nopin { height: 22px; font-size: 9.150px; color: #888; padding-bottom: 1px; }
.all { height: 24px; }
.newpage { height: 28px; padding-left: 7px; font-size: 10px; }
.newpage span { width: 64px; margin-left: 4px; }
.newpage .a1 { margin: 3px 0 0 13px; } .newpage .a2 { margin-left: 8px; } .newpage .a3 { margin-left: 9px; } .newpage .a4 { margin-left: 11px; }
.tree { padding-top: 1px; flex: 1; }
.node { height: 19px; display: flex; align-items: center; font-size: 10.650px; padding-left: 31px; gap: 6px; color: #222; }
.node svg { width: 12px; height: 14px; }
.node:nth-child(odd) { background: #f8f8f8; }
.node.root { padding-left: 4px; }
.root i { border: 3.500px solid transparent; border-top: 5px solid #333; border-bottom: 0; margin-right: -1px; }
.node.sel { background: #006be6; color: #fff; font-weight: bold; font-size: 9.900px; }
.sel .npin { width: 7px; height: 11px; color: #80b3f2; margin-left: auto; }
.sel .neye { width: 12px; height: 11px; margin-right: 12px; }
.plan { height: 45px; border-top: 3px solid #ccc; padding: 5px 5px 0; font-size: 10.750px; line-height: 13px; color: #000; }
.planrow { display: flex; justify-content: space-between; }
.quota { width: 101px; height: 7px; border: 1px solid #006be6; border-radius: 4px; margin-top: 5px; overflow: hidden; }
.quota i { display: block; width: 33%; height: 100%; background: #006be6; }
.planrow button { width: 53px; height: 18px; background: #0062d4; border: 1px solid #004ba6; border-radius: 2px; color: #fff; font-size: 9px; font-weight: bold; letter-spacing: -.5px; margin: 1px 9px 0 0; }

/* rulers */
.editor { width: 1454px; display: flex; flex-direction: column; flex: none; }
.hruler { height: 17px; background: #fff; border-bottom: 1px solid #ccc; overflow: hidden; padding-left: 16px; flex: none; }
.htrack { display: flex; overflow: hidden; height: 16px; border-left: 1px solid #ccc; }
.htrack b, .vtrack b { font-weight: 400; font-size: 8.500px; color: #999; flex: none; }
.htrack b { width: 60.830px; border-left: 1px solid #ccc; padding: 1px 0 0 2.500px; line-height: 9px; background: repeating-linear-gradient(90deg, transparent 0 5.080px, #ccc 5.080px 6.083px) 0 100% / 100% 4px no-repeat; }
.htrack b:first-child { margin-left: -48.500px; }
.below { display: flex; flex: 1; min-height: 0; }
.vruler { width: 17px; background: #fff; border-right: 1px solid #ccc; overflow: hidden; flex: none; }
.vtrack { margin-top: -56px; display: flex; flex-direction: column; }
.vtrack b { height: 60.830px; border-bottom: 1px solid #ccc; writing-mode: sideways-lr; line-height: 10px; padding: 0 5px 2px 0; display: flex; align-items: center; background: repeating-linear-gradient(0deg, transparent 0 5.080px, #ccc 5.080px 6.083px) 100% 0 / 4px 100% no-repeat; }

/* canvas */
.stagecol { width: 1419px; display: flex; flex-direction: column; }
.stage { height: 890px; background: #ededed; position: relative; }
.page { position: absolute; left: 134px; top: 125px; width: 1169px; height: 657px; background: #fff; border: 1px solid #ddd; }
.page > * { position: absolute; }
.banner { left: -1px; top: -1px; width: 1169px; height: 43px; border: 1px solid #777; }
.ph { width: 147px; height: 82px; background: #e6e6e6; display: flex; align-items: center; justify-content: center; }
.ph svg { width: 52px; height: 36px; margin: 0 0 1px 1px; }
.ph.logo { left: 12px; top: 10px; width: 91px; height: 22px; }
.ph.logo svg { width: 15px; height: 10px; }
.navbtn { top: 10px; width: 103px; height: 21px; border: 1px solid #777; border-radius: 2px; background: #eaeaea; font-size: 8.500px; line-height: 18px; text-align: center; }
.n1 { left: 455px; } .n2 { left: 591px; } .n3 { left: 727px; } .n4 { left: 859px; } .n5 { left: 983px; }
.user { left: 1116px; top: 3px; width: 35px; height: 35px; }
.game { display: flex; gap: 16px; }
.g1 { left: 12px; top: 73px; } .g2 { left: 455px; top: 73px; } .g3 { left: 830px; top: 84px; }
.g4 { left: 12px; top: 246px; } .g5 { left: 455px; top: 246px; } .g6 { left: 830px; top: 246px; }
.info { display: flex; flex-direction: column; width: 135px; }
.info p { font-size: 15.800px; line-height: 18px; color: #000; margin: 2px 0 10px 1px; }
.info button { width: 95px; height: 21px; border: 1px solid #777; border-radius: 2px; background: #eaeaea; font-size: 14.400px; color: #222; line-height: 18px; margin-bottom: 11px; }
.controls { position: absolute; left: 14px; top: 858px; display: flex; gap: 7px; }
.zoombox, .undobox { height: 34px; border: 1px solid #e1e1e1; border-radius: 4px; background: #f9f9f9; display: flex; align-items: center; justify-content: space-between; }
.zoombox { width: 104px; padding: 0 10px; font-size: 9px; font-weight: bold; color: #000; letter-spacing: .2px; }
.undobox { width: 64px; padding: 0 8px 0 9px; }
.chat { position: absolute; left: 1356px; top: 865px; width: 65px; height: 27px; border: 1.500px solid #006be6; border-radius: 14px; background: #fff; color: #006be6; font-size: 12px; display: flex; align-items: center; gap: 3px; padding: 0 0 1px 13px; z-index: 1; }
.hscroll { height: 17px; background: #f0f0f0; display: flex; align-items: center; justify-content: space-between; padding: 0 6px 2px; }
.left, .right { border: 4px solid transparent; }
.left { border-right: 5px solid #444; border-left: 0; }
.right { border-left: 5px solid #444; border-right: 0; }
.hscroll .thumb { width: 592px; height: 13px; background: #bfbfbf; margin-right: 9px; }
.vscroll { width: 18px; background: #f0f0f0; border-right: 1px solid #ccc; display: flex; flex-direction: column; align-items: center; }
.up, .down { border: 4px solid transparent; }
.up { border-bottom: 5px solid #444; border-top: 0; margin-top: 7px; }
.down { border-top: 5px solid #444; border-bottom: 0; margin: 250px 0 8px; }
.vscroll .thumb { width: 13px; height: 376px; background: #bfbfbf; margin-top: 239px; }
.corner { width: 17px; height: 17px; background: #dcdcdc; }

/* properties */
.props { width: 232px; overflow: hidden; }
.props h3 { margin: 0; height: 22px; background: #fff; border-block: 1px solid #ddd; padding-left: 9px; font-size: 8.800px; font-weight: 400; line-height: 19px; color: #333; white-space: nowrap; }
.props h3:first-child { border-top: 0; }
.sec { padding-left: 12px; width: 221px; color: #777; }
.s1 { height: 203px; padding-top: 16px; } .s2 { height: 111px; padding-top: 17px; } .s3 { padding-top: 11px; width: 232px; }
.box { background: #fff; border: 1px solid #b5b5b5; border-radius: 2px; display: flex; align-items: center; }
.select { height: 26px; padding: 0 6px; color: #222; }
.select span { flex: 1; margin-left: 9px; }
.dn { border: 3px solid transparent; border-top: 5px solid #666; border-bottom: 0; }
.sizes { display: flex; margin-top: 6px; height: 54px; }
.dims { width: 81px; }
.dim { height: 22px; padding-left: 4px; gap: 6px; color: #222; margin-bottom: 9px; }
.link { width: 20px; display: flex; flex-direction: column; align-items: flex-end; padding-top: 11px; }
.link i { width: 13px; height: 8px; border: 1px solid #ccc; border-width: 1px 1px 0 0; margin: 0 7px 3px 0; }
.link svg { margin-bottom: 3px; }
.link i:last-child { border-width: 0 1px 1px 0; height: 5px; }
.orient { margin-left: auto; width: 84px; }
.orow { display: flex; height: 24px; margin-bottom: 6px; }
.orow span { flex: 1; display: flex; align-items: center; justify-content: center; }
.orow .act { background: #fff; }
.fill { height: 23px; padding: 0 0 0 4px; gap: 4px; }
.fill b { flex: 1; height: 21px; border: 1px solid #ccc; border-radius: 2px; }
.sec a { display: block; width: max-content; color: #006be6; line-height: 13px; height: 14px; border-bottom: 1px dotted #006be6; }
.l1 { margin-top: 6px; } .l2 { margin-top: 8px; }
.hide { display: flex; align-items: center; margin-top: 7px; gap: 4px; line-height: 16px; width: 216px; }
.cb { width: 11px; height: 11px; border: 1px solid #777; border-radius: 2px; background: #fff; flex: none; }
.hide .cb { margin-top: 2px; }
.frow { display: flex; justify-content: space-between; height: 24px; margin-bottom: 6px; }
.frow .box { height: 23px; }
.box em { width: 18px; border-left: 1px solid #b5b5b5; height: 100%; margin-left: auto; display: flex; justify-content: center; padding-top: 7px; }
.ff { width: 130px; padding-left: 5px; color: #888; }
.fw { width: 73px; padding-left: 4px; font-size: 8.800px; color: #111; }
.fc { width: 102px; padding-left: 6px; gap: 8px; }
.fc b { flex: 1; height: 19px; border: 1px solid #ccc; border-radius: 2px; text-align: center; font-size: 8px; line-height: 17px; color: #999; margin-right: 1px; }
.fs { width: 102px; padding-left: 3px; color: #888; }
.fs small { font-size: 8px; font-weight: bold; color: #666; } .fs strong { font-size: 9.500px; color: #666; margin-right: 6px; }
.fs u { font-size: 8px; color: #bbb; margin-left: auto; margin-right: 2px; } .fs em { margin-left: 0; }
.ctabs { display: flex; height: 24px; line-height: 18px; white-space: nowrap; }
.ctabs .cur { width: 88px; padding-left: 6px; color: #1565f0; font-weight: bold; font-size: 11.500px; border-bottom: 1px solid #1565f0; margin-right: 6px; }
.checks { display: flex; margin-top: 13px; height: 16px; color: #222; white-space: nowrap; }
.checks label { display: flex; align-items: center; gap: 4px; width: 64px; }
.checks label:nth-child(2) { width: 74px; }
.ck { width: 11px; height: 11px; }
.swatches { display: flex; height: 19px; margin: 16px 0 6px; }
.swatches i { width: 18.600px; background: #ebebeb; }
.swatches i:nth-child(1) { width: 37px; background: #fff; } .swatches i:nth-child(3) { background: #e6e6e6; } .swatches i:nth-child(4) { background: #b2b2b2; } .swatches i:nth-child(5) { background: #222; } .swatches i:nth-child(6) { background: #000; }
.s3 p { line-height: 16px; width: 205px; }

/* taskbar */
.taskbar { height: 40px; flex: none; background: #1d2b3b; display: flex; color: #fff; font-family: "Open Sans", "Noto Sans", sans-serif; }
.start { display: grid; grid-template-columns: repeat(3, 48px); grid-template-rows: 39px; place-items: center; width: 144px; margin-left: -5px; }
.apps { display: flex; margin-left: 2px; }
.apps span { width: 49px; height: 40px; display: flex; justify-content: center; padding-top: 8px; background: linear-gradient(#b5b5b5, #b5b5b5) 50% 100% / 0 2px no-repeat; }
.apps svg { width: 24px; height: 24px; }
.apps .open { background-size: 40px 2px; }
.apps .focus { background-size: 100% 2px; background-color: #303740; }
.tray { margin-left: auto; display: flex; height: 39px; align-items: center; }
.tray span { width: 24px; display: flex; justify-content: center; }
.tray span svg { width: 16px; height: 16px; }
.lang, .clock { font-size: 12px; line-height: 18px; text-align: center; letter-spacing: -.3px; }
.lang { width: 34px; }
.clock { width: 74px; letter-spacing: -.5px; }
.notif { width: 26px; height: 26px; margin: 4px 15px 0 9px; }
```
